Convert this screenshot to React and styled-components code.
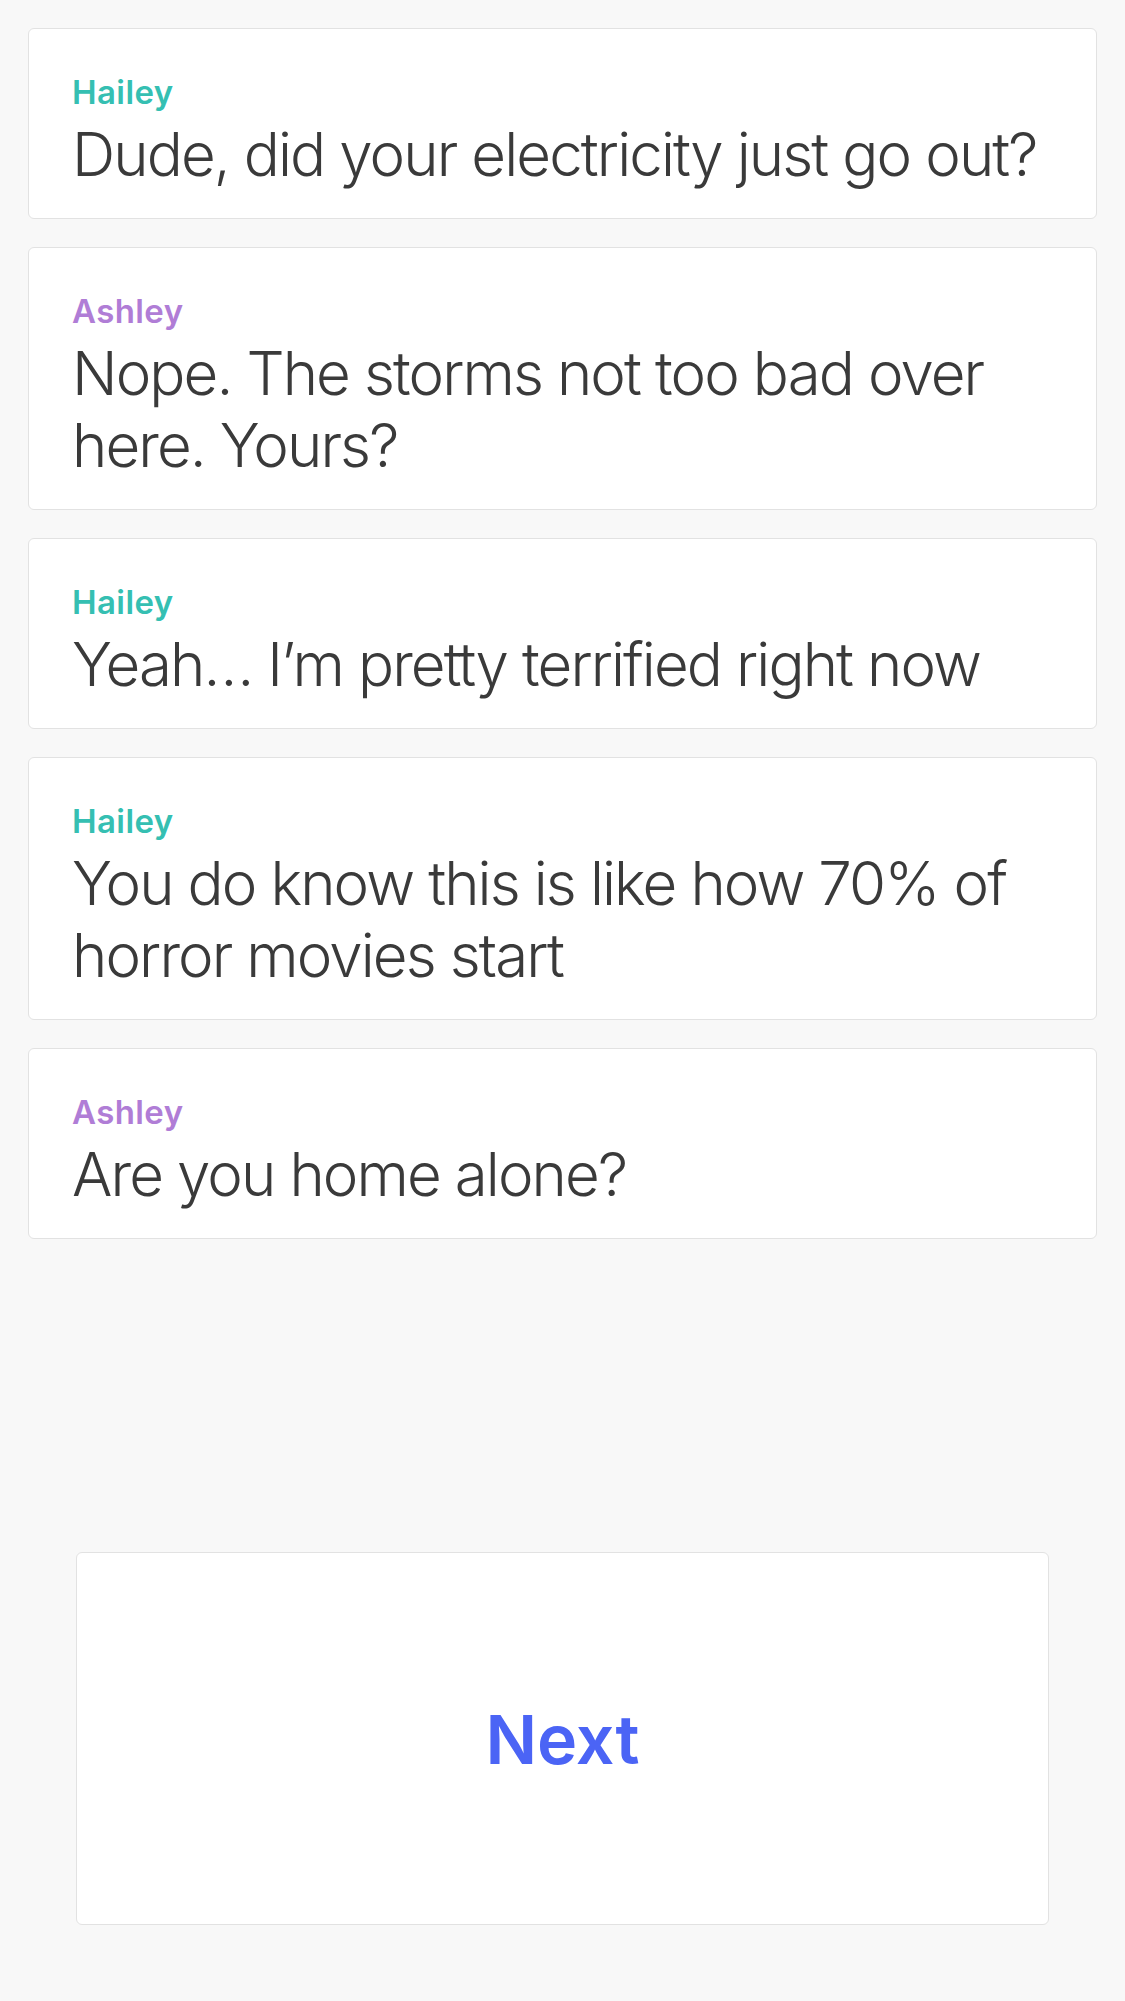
import React from "react";
import styled, { createGlobalStyle } from "styled-components";

const GlobalStyle = createGlobalStyle`
  * { box-sizing: border-box; }
  html, body { margin: 0; padding: 0; background: #f8f8f8; }
  body { font-family: Inter, "Noto Sans", sans-serif; -webkit-font-smoothing: antialiased; }
`;

const Screen = styled.div`
  min-height: 100vh;
  display: flex;
  flex-direction: column;
  background: #f8f8f8;
`;

const Thread = styled.div`
  display: flex;
  flex-direction: column;
  gap: 28px;
  padding: 28px 28px 0;
`;

const Card = styled.div`
  background: #ffffff;
  border: 1px solid #e2e2e2;
  border-radius: 6px;
  padding: 43px 40px 28px 43px;
  display: flex;
  flex-direction: column;
`;

const Sender = styled.div`
  font-family: Inter, "Noto Sans", sans-serif;
  font-weight: 600;
  font-size: 33px;
  line-height: 40px;
  letter-spacing: 0.4px;
  color: ${(p) => p.$color};
`;

const Body = styled.div`
  margin-top: 6px;
  font-family: Inter, "Noto Sans", sans-serif;
  font-weight: 300;
  font-size: 60px;
  line-height: 72px;
  letter-spacing: -1.9px;
  color: #3a3a3a;
`;

const Footer = styled.div`
  margin-top: auto;
  padding: 0 76px 76px;
`;

const NextButton = styled.button`
  width: 100%;
  height: 373px;
  background: #ffffff;
  border: 1px solid #e2e2e2;
  border-radius: 6px;
  font-family: Inter, "Noto Sans", sans-serif;
  font-weight: 600;
  font-size: 68px;
  letter-spacing: 0;
  color: #4b64f5;
  cursor: pointer;
  display: flex;
  align-items: center;
  justify-content: center;
`;

const COLORS = { Hailey: "#35bfb2", Ashley: "#b07dd6" };

const messages = [
  { from: "Hailey", text: "Dude, did your electricity just go out?" },
  { from: "Ashley", text: "Nope. The storms not too bad over here. Yours?" },
  { from: "Hailey", text: "Yeah… I’m pretty terrified right now" },
  { from: "Hailey", text: "You do know this is like how 70% of horror movies start" },
  { from: "Ashley", text: "Are you home alone?" },
];

export default function App() {
  return (
    <>
      <GlobalStyle />
      <Screen>
        <Thread>
          {messages.map((m, i) => (
            <Card key={i}>
              <Sender $color={COLORS[m.from]}>{m.from}</Sender>
              <Body>{m.text}</Body>
            </Card>
          ))}
        </Thread>
        <Footer>
          <NextButton>Next</NextButton>
        </Footer>
      </Screen>
    </>
  );
}
